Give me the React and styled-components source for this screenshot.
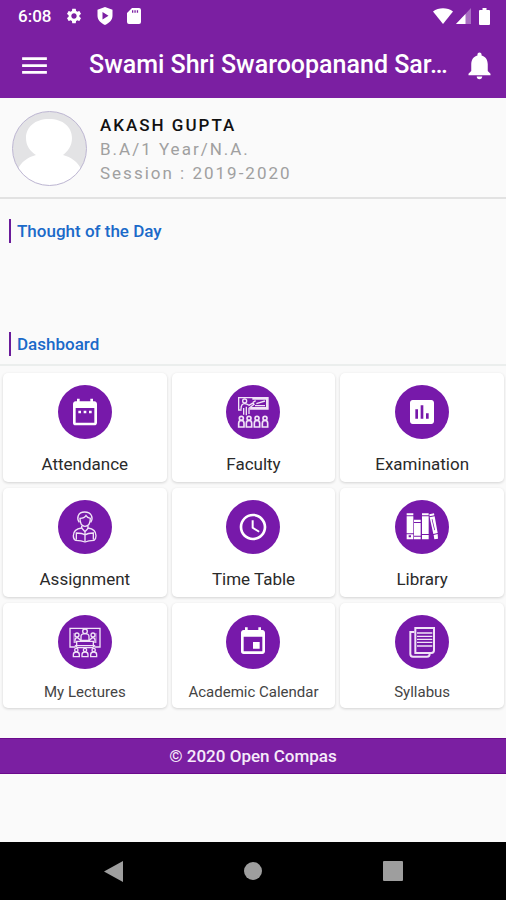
import styled, { createGlobalStyle } from 'styled-components'
import {
  MdAccessTime,
  MdDateRange,
  MdEvent,
  MdMenu,
  MdNotifications,
  MdPoll,
  MdSettings,
} from 'react-icons/md'

const colors = {
  primary: '#7b1fa2',
  circle: '#7719aa',
  link: '#1b6ac9',
  background: '#fafafa',
  muted: '#a0a0a0',
  bar: '#6a1b9a',
}

const GlobalStyle = createGlobalStyle`
  * {
    box-sizing: border-box;
  }

  body {
    margin: 0;
    background-color: ${colors.background};
    font-family: Roboto, 'Liberation Sans', sans-serif;
  }

  button {
    border: 0;
    padding: 0;
    background: none;
    color: inherit;
    font: inherit;
    cursor: pointer;
  }

  svg {
    display: block;
  }
`

const Page = styled.div`
  min-height: 100vh;
  display: flex;
  flex-direction: column;
`

const Header = styled.header`
  background-color: ${colors.primary};
  color: white;
`

const StatusBar = styled.div`
  height: 32px;
  padding: 0 16px 0 18px;
  display: flex;
  align-items: center;
  justify-content: space-between;
  font-size: 17px;
  font-weight: 500;
`

const StatusGroup = styled.div`
  display: flex;
  align-items: center;
  gap: ${({ $gap }) => $gap}px;
`

const Toolbar = styled.div`
  height: 66px;
  padding: 0 10px 0 18px;
  display: flex;
  align-items: center;
`

const IconButton = styled.button`
  flex: none;
`

const Title = styled.h1`
  flex: 1;
  min-width: 0;
  margin: 0 12px 0 38px;
  overflow: hidden;
  text-overflow: ellipsis;
  white-space: nowrap;
  font-size: 25px;
  font-weight: 500;
  line-height: 32px;
`

const Profile = styled.section`
  padding: 13px 12px 11px;
  display: flex;
  align-items: center;
  gap: 13px;
  border-bottom: 2px solid #e2e2e2;
`

const ProfileText = styled.div`
  color: ${colors.muted};
  font-size: 17px;
  line-height: 24px;
  letter-spacing: 2px;
`

const Name = styled.h2`
  margin: 0;
  color: #111;
  font-size: 17px;
  font-weight: 500;
  line-height: 24px;
`

const Line = styled.p`
  margin: 0;
`

const Section = styled.section`
  padding: ${({ $padding }) => $padding};
`

const SectionTitle = styled.h2`
  margin: 0;
  padding-left: 6px;
  border-left: 2px solid ${colors.bar};
  color: ${colors.link};
  font-size: 17px;
  font-weight: 500;
  line-height: 24px;
`

const Grid = styled.div`
  padding: 7px 2px 0 3px;
  display: grid;
  grid-template-columns: repeat(3, 1fr);
  gap: 6px 5px;
  border-top: 2px solid #ebeeed;
`

const Card = styled.button`
  && {
    padding: 12px 0 7px;
    display: flex;
    flex-direction: column;
    align-items: center;
    gap: 14px;
    border-radius: 5px;
    background-color: white;
    box-shadow: 0 1px 3px rgba(0, 0, 0, 0.16);
    color: ${({ $small }) => ($small ? '#444' : '#2a2a2a')};
    font-size: ${({ $small }) => ($small ? 15 : 17)}px;
    line-height: ${({ $small }) => ($small ? 18 : 22)}px;
  }
`

const Circle = styled.span`
  width: 54px;
  height: 54px;
  display: flex;
  align-items: center;
  justify-content: center;
  border-radius: 50%;
  background-color: ${colors.circle};
  color: white;
`

const Footer = styled.footer`
  margin-top: 30px;
  background-color: ${colors.primary};
  border: solid #6b0a8c;
  border-width: 1px 0;
  color: #f6ebfa;
  text-align: center;
  font-size: 17px;
  font-weight: 500;
  line-height: 34px;
`

const NavBar = styled.nav`
  height: 58px;
  margin-top: auto;
  display: flex;
  justify-content: center;
  background-color: black;
  color: #9e9e9e;
`

const NavButton = styled.button`
  width: 140px;
  display: flex;
  align-items: center;
  justify-content: center;
`

function ShieldIcon() {
  return (
    <svg width="16" height="18" viewBox="0 0 16 18" fill="white">
      <path
        fillRule="evenodd"
        d="M8 0l7.500 2.800v6c0 4-3.200 7.500-7.500 9.200C3.700 16.300.5 12.800.5 8.800v-6zM5.500 5v7.500l6-3.700z"
      />
    </svg>
  )
}

function SdIcon() {
  return (
    <svg width="14" height="16" viewBox="0 0 14 16" fill="white">
      <path
        fillRule="evenodd"
        d="M5 0h7a2 2 0 0 1 2 2v12a2 2 0 0 1-2 2H2a2 2 0 0 1-2-2V5zM5 2.200v2.500h1.300V2.200zm2.400 0v2.500h1.300V2.200zm2.400 0v2.500h1.300V2.200z"
      />
    </svg>
  )
}

function WifiIcon() {
  return (
    <svg width="20" height="16" viewBox="0 0 20 16" fill="white">
      <path d="M0 3.500C5.500-.9 14.500-.9 20 3.500L10 16z" />
    </svg>
  )
}

function SignalIcon() {
  return (
    <svg width="15" height="16" viewBox="0 0 15 16" fill="white">
      <path d="M15 0v16H0z" opacity="0.35" />
      <path d="M9.500 6v10H0z" />
    </svg>
  )
}

function BatteryIcon() {
  return (
    <svg width="16" height="17" viewBox="-5 0 16 17" fill="white">
      <path d="M3.500 0h4v2H10a1 1 0 0 1 1 1v13a1 1 0 0 1-1 1H1a1 1 0 0 1-1-1V3a1 1 0 0 1 1-1h2.500z" />
    </svg>
  )
}

function Avatar() {
  return (
    <svg width="75" height="75" viewBox="0 0 75 75" role="img" aria-label="Akash Gupta">
      <clipPath id="avatar">
        <circle cx="37.500" cy="37.500" r="37" />
      </clipPath>
      <g clipPath="url(#avatar)">
        <rect width="75" height="75" fill="#e3e3e5" />
        <path
          fill="white"
          d="M37 8c14 0 23 8 23 19 0 8-4 13-9 17 8 2 15 7 18 14v17H6V58c3-7 10-12 18-14-6-4-10-9-10-17C14 16 23 8 37 8z"
        />
      </g>
      <circle cx="37.500" cy="37.500" r="37" fill="none" stroke="#bdb6d2" />
    </svg>
  )
}

// the line drawings share one 96 unit box
function LineIcon({ children }) {
  return (
    <svg width="32" height="32" viewBox="0 0 96 96" fill="none" stroke="#f1e3f7" strokeWidth="4">
      {children}
    </svg>
  )
}

function FacultyIcon() {
  return (
    <LineIcon>
      <path d="M14 42H5V5h88v34H38M46 9h43v26H40" />
      <path d="M58 23l26-8M54 29h30M48 19l8-5" />
      <circle cx="23" cy="15" r="6" />
      <path d="M12 40c0-12 4-17 11-17 6 0 9 2 13 5l12-7 3 4-15 12v17M20 36v20M28 32v26" />
      {[13, 36, 60, 84].map((x) => (
        <g key={x} strokeWidth="5">
          <circle cx={x} cy="67" r="6" />
          <path d={`M${x - 8} 93V82c0-6 3-9 8-9s8 3 8 9v11z`} />
        </g>
      ))}
    </LineIcon>
  )
}

function AssignmentIcon() {
  return (
    <LineIcon>
      <path d="M31 34c-9-12-5-31 16-31s27 18 18 31" />
      <path d="M33 22c8 0 15-3 18-8 3 5 8 7 13 8 0 13-5 24-16 24S33 35 33 22z" />
      <path d="M38 45v6c-14 2-25 7-25 23 0 7 2 12 7 14 9 0 20 1 28 5 8-4 19-5 27-5 5-3 6-8 6-14 0-16-11-21-24-23v-6" />
      <path d="M48 92V63M22 86V66c10 0 19 1 26 6 7-5 15-6 25-6v20M38 51l10 11 10-11" />
    </LineIcon>
  )
}

function LibraryIcon() {
  return (
    <svg width="32" height="32" viewBox="0 0 96 96" fill="white">
      <path fillRule="evenodd" d="M2 7h20v6H2zM2 16h20v51H2zM2 70h20v15H2zM8 73v6h7v-6z" />
      <path d="M24 26h20v7H24zM24 36h20v38H24zM24 77h20v8H24z" />
      <path d="M48 7h20v6H48zM48 16h20v53H48zM48 72h20v13H48z" />
      <path
        fillRule="evenodd"
        d="M70 10l14-3 1 6-14 3zM71 19l15-3 9 50-13 3zM83 72l12-3 1 14-11 2zM77 25l8 33 2-1-8-33z"
      />
    </svg>
  )
}

function LecturesIcon() {
  return (
    <LineIcon>
      <path d="M20 63H3V7h90v56H76" />
      <path d="M15 21v30M81 21v30" strokeWidth="2" />
      <circle cx="48" cy="16" r="7" />
      <path d="M36 42V32c0-6 4-9 12-9s12 3 12 9v10" />
      <circle cx="24" cy="27" r="6" />
      <circle cx="72" cy="27" r="6" />
      <path d="M18 51V42c0-5 3-7 8-7l9 8h26l9-8c5 0 8 2 8 7v9M23 46h50v13H23zM18 58l7 7h46l7-7" />
      {[22, 48, 74].map((x) => (
        <g key={x}>
          <circle cx={x} cy="72" r="5" />
          <path d={`M${x - 9} 92v-6c0-5 4-8 9-8s9 3 9 8v6z`} />
        </g>
      ))}
    </LineIcon>
  )
}

function SyllabusIcon() {
  return (
    <LineIcon>
      <path d="M28 6h56v67a8 8 0 0 1-8 8H28z" strokeWidth="6" />
      <path d="M25 18H13v66a8 8 0 0 0 8 8h42c5 0 8-3 8-8" strokeWidth="6" />
      <path d="M33 21h46M33 31h46M33 40h46M33 49h46M33 60h46" />
    </LineIcon>
  )
}

const tiles = [
  { label: 'Attendance', icon: <MdDateRange size={32} /> },
  { label: 'Faculty', icon: <FacultyIcon /> },
  { label: 'Examination', icon: <MdPoll size={32} /> },
  { label: 'Assignment', icon: <AssignmentIcon /> },
  { label: 'Time Table', icon: <MdAccessTime size={32} /> },
  { label: 'Library', icon: <LibraryIcon /> },
  { label: 'My Lectures', icon: <LecturesIcon />, small: true },
  { label: 'Academic Calendar', icon: <MdEvent size={32} />, small: true },
  { label: 'Syllabus', icon: <SyllabusIcon />, small: true },
]

function App() {
  return (
    <Page>
      <GlobalStyle />
      <Header>
        <StatusBar>
          <StatusGroup $gap={14}>
            <span>6:08</span>
            <MdSettings size={18} />
            <ShieldIcon />
            <SdIcon />
          </StatusGroup>
          <StatusGroup $gap={3}>
            <WifiIcon />
            <SignalIcon />
            <BatteryIcon />
          </StatusGroup>
        </StatusBar>
        <Toolbar>
          <IconButton aria-label="Menu">
            <MdMenu size={33} />
          </IconButton>
          <Title>Swami Shri Swaroopanand Sar…</Title>
          <IconButton aria-label="Notifications">
            <MdNotifications size={33} />
          </IconButton>
        </Toolbar>
      </Header>

      <Profile>
        <Avatar />
        <ProfileText>
          <Name>AKASH GUPTA</Name>
          <Line>B.A/1 Year/N.A.</Line>
          <Line>Session : 2019-2020</Line>
        </ProfileText>
      </Profile>

      <Section $padding="20px 9px 89px">
        <SectionTitle>Thought of the Day</SectionTitle>
      </Section>
      <Section $padding="0 9px 8px">
        <SectionTitle>Dashboard</SectionTitle>
      </Section>

      <Grid>
        {tiles.map(({ label, icon, small }) => (
          <Card key={label} $small={small}>
            <Circle>{icon}</Circle>
            {label}
          </Card>
        ))}
      </Grid>

      <Footer>© 2020 Open Compas</Footer>

      <NavBar>
        <NavButton aria-label="Back">
          <svg width="19" height="21" viewBox="0 0 19 21" fill="currentColor">
            <path d="M19 0v21L0 10.500z" />
          </svg>
        </NavButton>
        <NavButton aria-label="Home">
          <svg width="18" height="18" viewBox="0 0 18 18" fill="currentColor">
            <circle cx="9" cy="9" r="9" />
          </svg>
        </NavButton>
        <NavButton aria-label="Recent apps">
          <svg width="20" height="20" viewBox="0 0 20 20" fill="currentColor">
            <rect width="20" height="20" rx="1" />
          </svg>
        </NavButton>
      </NavBar>
    </Page>
  )
}

export default App
